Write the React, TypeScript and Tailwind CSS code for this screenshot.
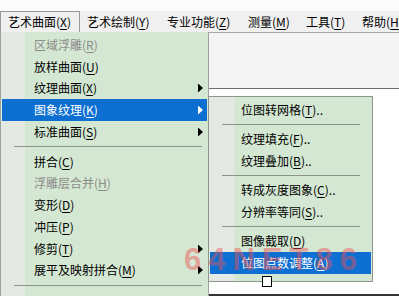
const menuBar = [
  { label: '艺术曲面', key: 'X', active: true, w: 'w-[80px]' },
  { label: '艺术绘制', key: 'Y', w: 'w-[80px]' },
  { label: '专业功能', key: 'Z', w: 'w-[81px]' },
  { label: '测量', key: 'M', w: 'w-[58px]' },
  { label: '工具', key: 'T', w: 'w-[56px]' },
  { label: '帮助', key: 'H', w: 'w-[60px]' },
]

type Item =
  | { sep: true }
  | { label: string; key: string; disabled?: boolean; sub?: boolean; active?: boolean; dots?: boolean; sep?: false }

const mainItems: Item[] = [
  { label: '区域浮雕', key: 'R', disabled: true },
  { label: '放样曲面', key: 'U' },
  { label: '纹理曲面', key: 'X', sub: true },
  { label: '图象纹理', key: 'K', sub: true, active: true },
  { label: '标准曲面', key: 'S', sub: true },
  { sep: true },
  { label: '拼合', key: 'C' },
  { label: '浮雕层合并', key: 'H', disabled: true },
  { label: '变形', key: 'D' },
  { label: '冲压', key: 'P' },
  { label: '修剪', key: 'T', sub: true },
  { label: '展平及映射拼合', key: 'M', sub: true },
  { sep: true },
]

const subItems: Item[] = [
  { label: '位图转网格', key: 'T', dots: true },
  { sep: true },
  { label: '纹理填充', key: 'F', dots: true },
  { label: '纹理叠加', key: 'B', dots: true },
  { sep: true },
  { label: '转成灰度图象', key: 'C', dots: true },
  { label: '分辨率等同', key: 'S', dots: true },
  { sep: true },
  { label: '图像截取', key: 'D' },
  { label: '位图点数调整', key: 'A', active: true },
]

const Label = ({ label, k, dots }: { label: string; k: string; dots?: boolean }) => (
  <span className="whitespace-nowrap">
    {label}(<span className="underline underline-offset-2">{k}</span>){dots ? '..' : ''}
  </span>
)

const Arrow = ({ white }: { white?: boolean }) => (
  <svg width="5" height="9" viewBox="0 0 5 9" className="absolute right-[4px] top-1/2 -translate-y-1/2">
    <path d="M0 0 L5 4.5 L0 9 Z" fill={white ? '#ffffff' : '#000000'} />
  </svg>
)

const MenuList = ({ items, rowH, sepL, sepR, textL }: { items: Item[]; rowH: string; sepL: string; sepR: string; textL: string }) => (
  <>
    {items.map((it, i) =>
      it.sep ? (
        <div key={i} className="h-[8px] flex items-center">
          <div className={`h-px bg-[#8a948a] ${sepL} ${sepR} flex-1`} />
        </div>
      ) : (
        <div
          key={i}
          className={`relative flex items-center ${rowH} ${textL} mx-[1px] ${
            it.active ? 'bg-[#0c6fd1] text-white' : it.disabled ? 'text-[#8c8c8c]' : 'text-black'
          }`}
        >
          <Label label={it.label} k={it.key} dots={it.dots} />
          {it.sub && <Arrow white={it.active} />}
        </div>
      )
    )}
  </>
)

export default function App() {
  return (
    <div
      className="relative w-[399px] h-[296px] overflow-hidden bg-white text-[12px] leading-none"
      style={{ fontFamily: '"Noto Sans CJK SC", "Noto Sans", sans-serif' }}
    >
      <div className="h-[11px] bg-[#fbfbfb]" />
      <div className="flex h-[21px] bg-[#f0f0f0]">
        {menuBar.map((m) => (
          <div
            key={m.label}
            className={`flex items-center h-full pl-[7px] shrink-0 ${m.w} ${
              m.active ? 'border border-b-0 border-[#9a9a9a] bg-[#f0f0f0]' : ''
            }`}
          >
            <Label label={m.label} k={m.key} />
          </div>
        ))}
      </div>
      <div className="flex h-[264px]">
        <div className="w-[209px] shrink-0 border-l border-r border-[#9aa59a] bg-[linear-gradient(to_right,#e4e9e4_0px,#e4e9e4_24px,#d4e7d2_24px)] pt-[2px]">
          <MenuList items={mainItems} rowH="h-[21.75px]" sepL="ml-[13px]" sepR="mr-[6px]" textL="pl-[32px]" />
        </div>
        <div className="flex-1 flex flex-col">
          <div className="h-[57px] border-t border-b border-t-[#a8a8a8] border-b-[#6e6e6e] bg-[#f4f4f4]" />
          <div className="flex-1 flex flex-col bg-white">
            <div className="h-[7px]" />
            <div className="-ml-[1px] w-[165px] h-[186px] border border-[#8e968e] bg-[linear-gradient(to_right,#e4e9e4_0px,#e4e9e4_25px,#d4e7d2_25px)] pt-[2px]">
              <MenuList items={subItems} rowH="h-[21.5px]" sepL="ml-[13px]" sepR="mr-[12px]" textL="pl-[31px]" />
            </div>
            <div className="flex-1 relative">
              <div className="absolute left-[53px] top-[-6px] w-[10px] h-[11px] border border-black bg-white" />
            </div>
            <div className="h-[2px] bg-[#333]" />
          </div>
        </div>
      </div>
      <div
        className="pointer-events-none absolute left-[184px] top-[244px] text-[31px] font-bold tracking-[7px] text-[#f05050] opacity-45"
        style={{ fontFamily: '"Liberation Sans", sans-serif' }}
      >
        64NET86
      </div>
    </div>
  )
}
